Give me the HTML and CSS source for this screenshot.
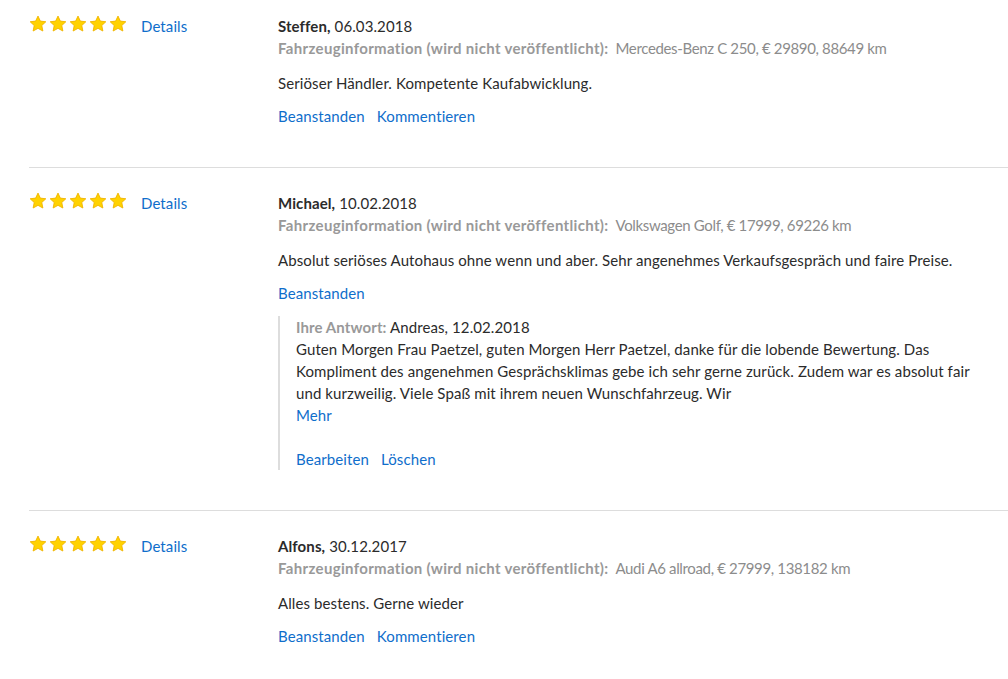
FILE: index.html
```html
<!DOCTYPE html>
<html lang="de">
<head>
<meta charset="utf-8">
<title>Bewertungen</title>
<link rel="stylesheet" href="styles.css">
</head>
<body>
<svg width="0" height="0" class="defs">
  <defs>
    <symbol id="star" viewBox="0 0 20 20">
      <path d="M10 1.2l2.6 5.6 6.1.7-4.5 4.2 1.2 6.1L10 14.8l-5.4 3 1.2-6.1L1.3 7.5l6.1-.7z" fill="#ffd200" stroke="#f0b400" stroke-width="1" stroke-linejoin="round"/>
    </symbol>
  </defs>
</svg>
<div class="list">
  <div class="entry">
    <div class="side">
      <div class="stars">
        <svg class="star"><use href="#star"/></svg><svg class="star"><use href="#star"/></svg><svg class="star"><use href="#star"/></svg><svg class="star"><use href="#star"/></svg><svg class="star"><use href="#star"/></svg>
      </div>
      <a class="link details" href="#">Details</a>
    </div>
    <div class="main">
      <div class="head"><b>Steffen,</b> 06.03.2018</div>
      <div class="car"><span class="car-label">Fahrzeuginformation (wird nicht veröffentlicht):</span><span class="car-value">Mercedes-Benz C 250, € 29890, 88649 km</span></div>
      <p class="text">Seriöser Händler. Kompetente Kaufabwicklung.</p>
      <div class="actions"><a class="link" href="#">Beanstanden</a><a class="link" href="#">Kommentieren</a></div>
    </div>
  </div>
  <div class="entry">
    <div class="side">
      <div class="stars">
        <svg class="star"><use href="#star"/></svg><svg class="star"><use href="#star"/></svg><svg class="star"><use href="#star"/></svg><svg class="star"><use href="#star"/></svg><svg class="star"><use href="#star"/></svg>
      </div>
      <a class="link details" href="#">Details</a>
    </div>
    <div class="main">
      <div class="head"><b>Michael,</b> 10.02.2018</div>
      <div class="car"><span class="car-label">Fahrzeuginformation (wird nicht veröffentlicht):</span><span class="car-value">Volkswagen Golf, € 17999, 69226 km</span></div>
      <p class="text">Absolut seriöses Autohaus ohne wenn und aber. Sehr angenehmes Verkaufsgespräch und faire Preise.</p>
      <div class="actions"><a class="link" href="#">Beanstanden</a></div>
      <div class="reply">
        <div class="reply-head"><span class="reply-label">Ihre Antwort:</span> Andreas, 12.02.2018</div>
        <p class="reply-text">Guten Morgen Frau Paetzel, guten Morgen Herr Paetzel, danke für die lobende Bewertung. Das Kompliment des angenehmen Gesprächsklimas gebe ich sehr gerne zurück. Zudem war es absolut fair und kurzweilig. Viele Spaß mit ihrem neuen Wunschfahrzeug. Wir</p>
        <a class="link more" href="#">Mehr</a>
        <div class="reply-actions"><a class="link" href="#">Bearbeiten</a><a class="link" href="#">Löschen</a></div>
      </div>
    </div>
  </div>
  <div class="entry">
    <div class="side">
      <div class="stars">
        <svg class="star"><use href="#star"/></svg><svg class="star"><use href="#star"/></svg><svg class="star"><use href="#star"/></svg><svg class="star"><use href="#star"/></svg><svg class="star"><use href="#star"/></svg>
      </div>
      <a class="link details" href="#">Details</a>
    </div>
    <div class="main">
      <div class="head"><b>Alfons,</b> 30.12.2017</div>
      <div class="car"><span class="car-label">Fahrzeuginformation (wird nicht veröffentlicht):</span><span class="car-value">Audi A6 allroad, € 27999, 138182 km</span></div>
      <p class="text">Alles bestens. Gerne wieder</p>
      <div class="actions"><a class="link" href="#">Beanstanden</a><a class="link" href="#">Kommentieren</a></div>
    </div>
  </div>
</div>
</body>
</html>
```

FILE: styles.css
```css
html, body {
  margin: 0;
  padding: 0;
  background: #fff;
}
body {
  font-family: Lato, "Open Sans", "Liberation Sans", sans-serif;
  font-size: 15px;
  line-height: 22px;
  letter-spacing: 0.1px;
  color: #2b2b2b;
  overflow: hidden;
}
.defs {
  position: absolute;
  width: 0;
  height: 0;
}
.list {
  padding-left: 29px;
}
.entry {
  display: flex;
  padding: 24px 0 40px;
  border-bottom: 1px solid #ddd;
}
.entry:first-child {
  padding-top: 15px;
}
.side {
  width: 249px;
  flex: none;
  display: flex;
  align-items: flex-start;
}
.stars {
  display: flex;
  gap: 2px;
  height: 22px;
  align-items: center;
  margin-top: -2px;
}
.star {
  width: 18px;
  height: 18px;
  display: block;
}
.details {
  margin-left: 14px;
}
.main {
  flex: 1;
  padding-right: 22px;
  min-width: 0;
}
.head b {
  font-weight: 700;
}
.car {
  color: #999;
}
.car-label {
  font-weight: 700;
  letter-spacing: 0.33px;
  margin-right: 7px;
}
.car-value {
  color: #8c8c8c;
  letter-spacing: -0.35px;
}
.text {
  margin: 13px 0 0;
}
.actions {
  margin-top: 11px;
  display: flex;
  gap: 12px;
}
.link {
  color: #0f6ecb;
  text-decoration: none;
}
.reply {
  margin-top: 12px;
  border-left: 2px solid #ddd;
  padding-left: 16px;
  display: flex;
  flex-direction: column;
  align-items: flex-start;
}
.reply-label {
  color: #999;
  font-weight: 700;
}
.reply-text {
  margin: 0;
}
.reply-actions {
  margin-top: 22px;
  display: flex;
  gap: 12px;
}
```
